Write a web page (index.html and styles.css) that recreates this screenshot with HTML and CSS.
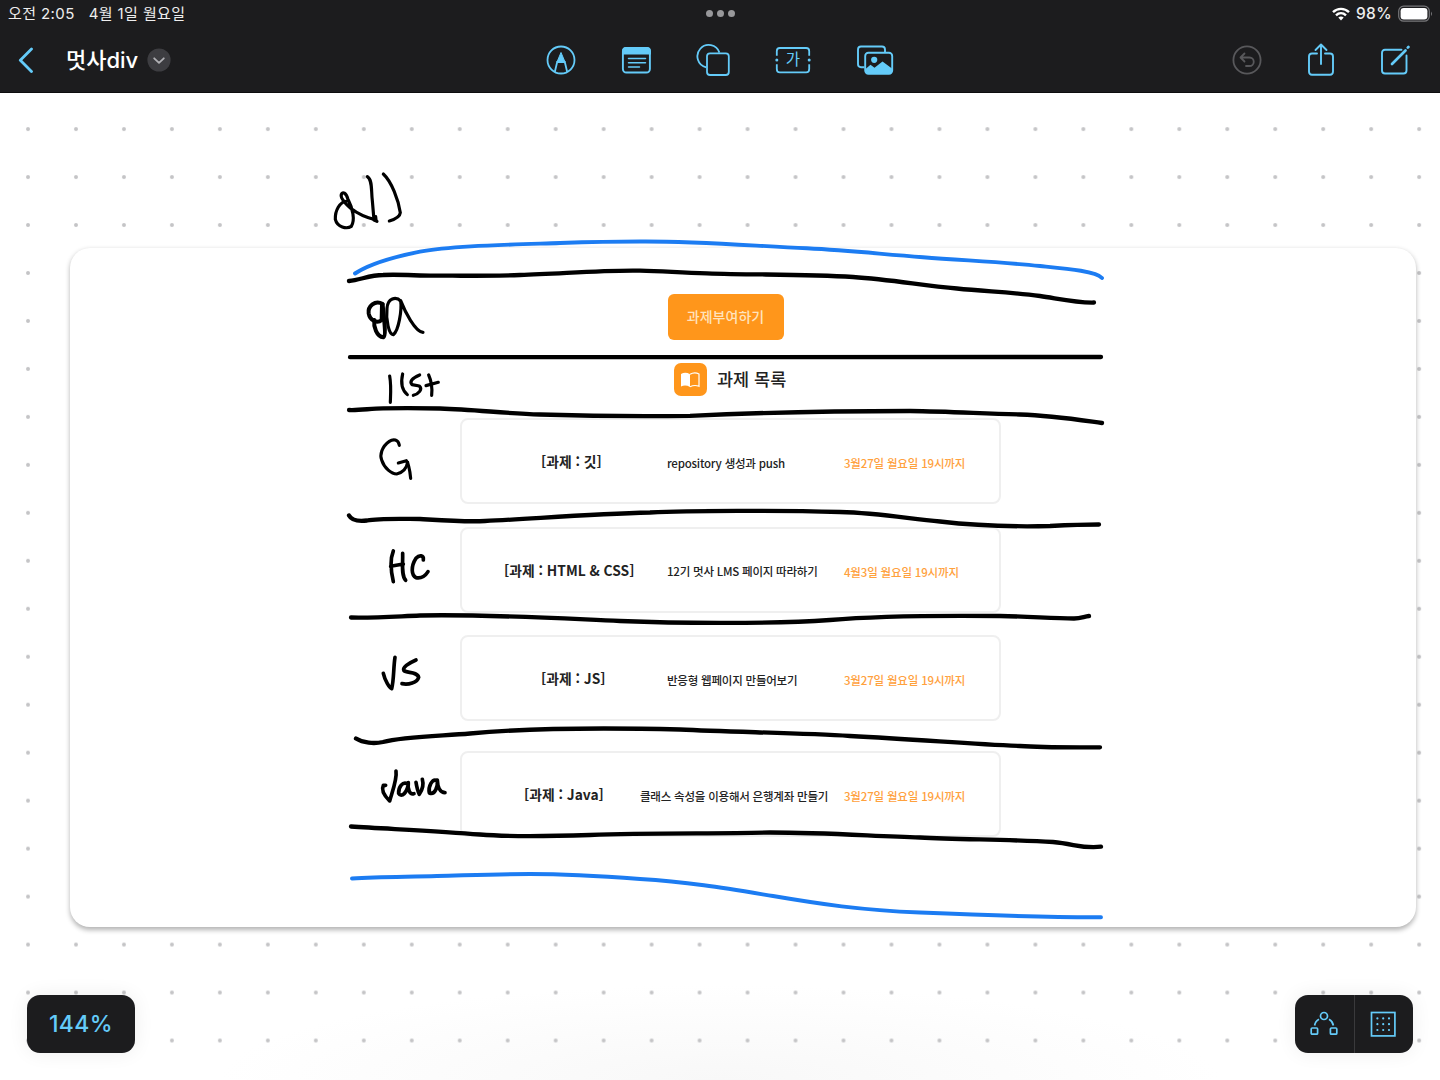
FILE: index.html
```html
<!DOCTYPE html>
<html lang="ko">
<head>
<meta charset="utf-8">
<title>멋사div</title>
<link rel="stylesheet" href="styles.css">
</head>
<body>
<div class="app">
  <header class="topbar">
    <div class="status">
      <div class="status-left"><span class="time">오전 2:05</span><span class="date">4월 1일 월요일</span></div>
      <div class="dots"><i></i><i></i><i></i></div>
      <div class="status-right">
        <svg class="wifi" width="18" height="14" viewBox="0 0 18 14" fill="none" stroke="#fff" stroke-width="2.4"><path d="M1 5.2C5.5.8 12.500.8 17 5.200M4 8.300C6.900 5.500 11.100 5.500 14 8.300"/><path d="M6.300 10.600Q9 8.400 11.700 10.600L9 13.400z" fill="#fff" stroke="none"/></svg>
        <span class="percent">98%</span>
        <svg width="36" height="18" viewBox="0 0 36 18"><rect x=".7" y="1.200" width="30.600" height="15" rx="5" fill="none" stroke="#77777a" stroke-width="1.200"/><rect x="2.600" y="3" width="26.800" height="11.400" rx="3.200" fill="#fff"/><path d="M33 6.500q2 2.300 0 4.600z" fill="#77777a"/></svg>
      </div>
    </div>
    <nav class="tools">
      <div class="nav-left">
        <svg width="16" height="26" viewBox="0 0 16 26" fill="none" stroke="#64cbf9" stroke-width="2.800" stroke-linecap="round" stroke-linejoin="round"><path d="M13.500 1.900L2.300 13.200L13.500 24.500"/></svg>
        <h1>멋사div</h1>
        <svg class="chevron" width="24" height="24" viewBox="0 0 24 24"><circle cx="12" cy="12" r="11.600" fill="#3d3d41"/><path d="M7.200 10.300L12 14.900L16.800 10.300" fill="none" stroke="#b0b0b4" stroke-width="1.800" stroke-linecap="round" stroke-linejoin="round"/></svg>
      </div>
      <div class="nav-center">
        <svg width="30" height="34" viewBox="0 0 30 34" fill="none" stroke="#64cbf9" stroke-width="1.800"><circle cx="15" cy="17" r="13.500"/><path d="M8.800 29L11.200 19H18.800L21.200 29"/><path d="M15 9.500L11 19H19z" fill="#64cbf9" stroke-linejoin="round" stroke-width="1"/></svg>
        <svg width="30" height="34" viewBox="0 0 30 34" fill="none" stroke="#64cbf9" stroke-width="1.900"><rect x="1.900" y="5" width="27" height="24.500" rx="3.500"/><path d="M2 10.500V8q0-3 3-3H26q3 0 3 3V10.500z" fill="#64cbf9"/><path d="M7.500 15.500H24.500M7.500 19.700H24.500M7.500 24H18.500" stroke-width="1.500" stroke-linecap="round"/></svg>
        <svg width="34" height="34" viewBox="0 0 34 34" fill="none" stroke="#64cbf9" stroke-width="1.800"><path d="M10.200 24.300A11.300 11.300 0 1 1 23.400 9.600"/><rect x="11" y="10.300" width="21.800" height="21.700" rx="3"/></svg>
        <svg width="36" height="34" viewBox="0 0 36 34" fill="none" stroke="#64cbf9" stroke-width="1.800"><path d="M1.800 12.800V8Q1.800 5 4.800 5H31.200Q34.200 5 34.200 8V12.800M1.800 21.200V26Q1.800 29.400 4.800 29.400H31.200Q34.200 29.400 34.200 26V21.200"/><g fill="#64cbf9" stroke="none"><circle cx="1.800" cy="17" r="1.500"/><circle cx="34.200" cy="17" r="1.500"/></g><text x="18" y="22.300" text-anchor="middle" class="ga">가</text></svg>
        <svg width="38" height="34" viewBox="0 0 38 34" fill="none" stroke="#64cbf9" stroke-width="1.900"><path d="M8.500 24.200H5Q2 24.200 2 21.200V6.700Q2 3.500 5 3.500H26Q29 3.500 29 6.700V9.500"/><rect x="9.200" y="9.700" width="27" height="21" rx="3.200"/><circle cx="18.200" cy="16.800" r="3.100" fill="#64cbf9" stroke="none"/><path d="M9.500 26L14.500 21.800L18.500 24.800L26.500 18.500L36 25.500V28Q36 30.500 33 30.500H12.500Q9.500 30.500 9.500 28z" fill="#64cbf9" stroke="none"/></svg>
      </div>
      <div class="nav-right">
        <svg width="30" height="34" viewBox="0 0 30 34" fill="none" stroke="#58585b" stroke-width="1.800" stroke-linecap="round" stroke-linejoin="round"><circle cx="15" cy="17" r="13.600"/><path d="M12.500 10.500L8.500 14.500L12.500 18.500M8.800 14.500H17.500A4.200 4.200 0 0 1 17.500 23H14"/></svg>
        <svg width="28" height="36" viewBox="0 0 28 36" fill="none" stroke="#64cbf9" stroke-width="1.900" stroke-linecap="round" stroke-linejoin="round"><path d="M10 11.500H5Q2 11.500 2 14.500V29.500Q2 32.700 5 32.700H23Q26 32.700 26 29.500V14.500Q26 11.500 23 11.500H18M14 22V2.800M8.500 8L14 2.500L19.500 8"/></svg>
        <svg width="30" height="34" viewBox="0 0 30 34" fill="none" stroke="#64cbf9" stroke-width="1.900" stroke-linecap="round"><path d="M21.500 6.800H5Q2 6.800 2 9.800V27.500Q2 30.500 5 30.500H23.500Q26.500 30.500 26.500 27.500V12.500"/><path d="M12 21L25.500 7.500" stroke-width="2.700"/><path d="M27.800 4.600L28.400 4" stroke-width="2.700"/></svg>
      </div>
    </nav>
  </header>

  <main class="board">
    <svg class="grid-dots" width="1440" height="987">
      <defs><pattern id="dots" x="4.020" y="12.100" width="47.970" height="47.970" patternUnits="userSpaceOnUse"><circle cx="24" cy="24" r="2" fill="#c4c4c6"/></pattern></defs>
      <rect width="1440" height="987" fill="url(#dots)"/>
    </svg>

    <section class="sheet">
      <div class="assign">과제부여하기</div>
      <div class="heading">
        <span class="book"><svg width="20" height="16" viewBox="0 0 20 16"><path d="M10 2.300Q5.500-.4 1 2V14.500Q5.500 12.500 10 15z" fill="#fff"/><path d="M10 2.300Q14.500-.4 19 2V14.300Q14.500 12.500 10 14.800" fill="none" stroke="#fff" stroke-width="1.200"/></svg></span>
        <h2>과제 목록</h2>
      </div>
      <div class="tasks">
        <article class="task git"><h3>[과제 : 깃]</h3><p>repository 생성과 push</p><time>3월27일 월요일 19시까지</time></article>
        <article class="task html"><h3>[과제 : HTML &amp; CSS]</h3><p>12기 멋사 LMS 페이지 따라하기</p><time>4월3일 월요일 19시까지</time></article>
        <article class="task js"><h3>[과제 : JS]</h3><p>반응형 웹페이지 만들어보기</p><time>3월27일 월요일 19시까지</time></article>
        <article class="task java"><h3>[과제 : Java]</h3><p>클래스 속성을 이용해서 은행계좌 만들기</p><time>3월27일 월요일 19시까지</time></article>
      </div>
    </section>

    <svg class="ink" width="1440" height="987" viewBox="0 93 1440 987">
      <g class="blue">
        <path d="M355 273.500C368 265 393 257 420 251.700C450 246 500 245 560 243C590 242 610 241.500 640 241.500C690 241 740 245 807 248.300C850 250.500 880 254 923 257.200C965 260.500 1000 262 1040 266C1065 268.500 1096 271 1102 278"/>
        <path d="M352 878.500C380 876.500 410 877 437 876C475 875 500 874 530 874C570 874 600 876 640 879C690 882 730 889 773 896C820 904 860 910 920 912.500C980 915 1040 917.500 1101 917.200"/>
      </g>
      <g class="black">
        <path d="M349 281C360 280 370 275 383 275C400 274 420 276 437 275.700C465 275.700 490 276 520 275C560 274 600 270 640 270.700C665 271 680 273 707 273.300C755 275 805 274 853 277C890 279.500 920 285 957 288.500C985 291.500 1010 292 1040 296C1060 299 1077 303 1094 302.500"/>
        <path d="M350 357.200L1101 357"/>
        <path d="M349 410C360 410.500 370 408.500 383 408.300C405 408 420 408 440 408.500C475 409.500 505 413.500 540 414.500C590 416 640 416.500 690 415.800C750 413 840 411 910 411C950 411.500 980 413.500 1020 414.500C1052 415.500 1080 420 1102 423"/>
        <path d="M349 515.500C352 521 359 521.500 367 520.500C380 518 405 519 420 519C445 520.500 465 522 485 521C530 519 590 514 650 512.500C690 510.500 780 510.500 840 512C880 513 910 519 940 521.500C970 525 1010 527 1050 526C1070 525 1085 524.500 1099 524.500"/>
        <path d="M351 617.500C375 618 395 616.500 420 615.500C480 614 550 618 620 621C680 623.500 770 624 830 620C875 616 950 615.500 1000 616C1030 616.500 1053 618.500 1074 618.500C1081 618.500 1084 616.500 1089 616"/>
        <path d="M356 738.500C363 743 374 744 383 742C403 736.500 440 736 470 733.500C530 728 620 728 680 729.500C730 732 800 733 850 736C920 739.500 970 744 1020 746C1040 747.500 1070 747.500 1100 747.300"/>
        <path d="M351 826.500C390 829 440 831 480 834.500C510 837 540 836.500 590 835C650 832.500 720 834 770 832.500C825 832.500 870 836 920 837.500C960 839.500 1010 839.500 1053 842C1075 844 1083 849 1101 846.700"/>
      </g>
      <g class="pen" transform="translate(320 160) scale(.3333)">
        <path d="M82 123C58 125 45 153 46 178C52 202 80 208 94 199C106 180 98 145 84 118C78 98 68 94 64 103C60 114 75 130 92 145C115 163 142 174 168 180L167 170"/>
        <path d="M142 50C158 60 153 90 157 122L162 180L171 184"/>
        <path d="M190 42C215 65 235 120 241 158C240 170 225 178 208 183"/>
        <path class="bold" d="M188 432C165 418 143 440 146 460C150 482 172 492 185 480L186 434"/>
        <path class="bold" d="M163 480C160 500 170 530 190 532C200 528 191 470 188 434"/>
        <path d="M243 424C228 408 203 414 201 445C197 480 207 525 220 524C236 512 246 450 242 422C255 455 285 515 309 517"/>
        <path d="M209 648C214 675 212 700 211 727"/>
        <path d="M248 642C242 668 245 690 262 704"/>
        <path d="M299 645C275 655 268 666 276 674L298 678C309 688 296 702 280 706"/>
        <path d="M326 645C335 665 337 688 335 706M318 677L355 667"/>
      </g>
      <g class="pen" transform="translate(340 400) scale(.3333)">
        <path d="M178 136C175 118 160 116 148 124C125 140 119 165 125 180C133 205 155 222 170 222C188 218 200 205 203 187"/>
        <path d="M175 189L199 182C208 194 210 215 212 235"/>
        <path class="firm" d="M160 453C149 480 153 515 160 545M188 460C189 490 183 525 197 541M152 499L190 492"/>
        <path class="firm" d="M250 480C252 465 238 464 228 475C212 500 214 525 228 533C245 537 258 525 264 515"/>
      </g>
      <g class="pen firm" transform="translate(340 620) scale(.3333)">
        <path d="M165 112C160 145 162 180 155 206C148 203 135 182 130 160"/>
        <path d="M228 120C205 130 186 143 192 152C200 160 232 154 236 172C232 188 205 195 186 191"/>
        <path d="M168 453C172 478 155 520 149 543C138 532 122 512 130 496L137 496"/>
        <path d="M203 492C188 484 175 500 176 520C184 535 203 518 205 488C202 508 210 526 222 521"/>
        <path d="M228 487C230 500 234 515 238 523C247 510 252 495 247 478"/>
        <path d="M291 482C277 474 264 500 268 519C285 526 294 500 292 480C293 500 300 518 315 518"/>
      </g>
    </svg>

    <div class="zoom">144%</div>
    <div class="modes">
      <div><svg width="28" height="26" viewBox="0 0 28 26" fill="none" stroke="#64cbf9" stroke-width="1.700"><circle cx="14" cy="5" r="3.500"/><rect x="1.200" y="17" width="6.400" height="6.200" rx="1"/><rect x="20.400" y="17" width="6.400" height="6.200" rx="1"/><path d="M4.600 14.500Q5.300 10.200 9 8.200M23.400 14.500Q22.700 10.200 19 8.200"/></svg></div>
      <div><svg width="26" height="26" viewBox="0 0 26 26"><rect x="1.500" y="1.500" width="23.400" height="23.400" fill="none" stroke="#64cbf9" stroke-width="1.700"/><g stroke="#64cbf9" stroke-width="2.200" stroke-linecap="round" stroke-dasharray="0 5.800"><path d="M7.400 7.400H19.100M7.400 13.200H19.100M7.400 19H19.100"/></g></svg></div>
    </div>
  </main>
</div>
</body>
</html>
```
FILE: styles.css
```css
* { box-sizing: border-box; margin: 0; padding: 0; }
body { width: 1440px; height: 1080px; overflow: hidden; background: #fff; font-family: Inter, "Noto Sans CJK KR", sans-serif; }
svg { display: block; flex: none; }
.app { display: flex; flex-direction: column; height: 1080px; }

.topbar { height: 93px; flex: none; background: #1c1c1e; color: #fff; border-bottom: 1px solid #0d0d0e; }
.status { display: grid; grid-template-columns: 1fr auto 1fr; align-items: center; height: 27px; padding: 0 6px 0 8px; font-weight: 500; color: #eee; white-space: nowrap; }
.status-left { display: flex; gap: 14px; font-size: 15px; font-weight: 400; line-height: 22px; letter-spacing: .4px; }
.dots { display: flex; gap: 4px; margin-right: 1px; }
.dots i { width: 7px; height: 7px; border-radius: 50%; background: #98989b; }
.status-right { display: flex; justify-content: flex-end; align-items: center; }
.wifi { margin-right: 6px; }
.percent { margin-right: 6px; font-size: 15.500px; letter-spacing: .4px; }
.tools { display: grid; grid-template-columns: 1fr auto 1fr; align-items: center; height: 66px; }
.nav-left { display: flex; align-items: center; padding-left: 18px; }
h1 { margin-left: 32px; font-size: 22px; font-weight: 500; line-height: 30px; }
.chevron { margin-left: 9px; }
.nav-center { display: flex; align-items: center; gap: 45px; }
.ga { fill: #64cbf9; stroke: none; font: 400 15.500px "Noto Sans CJK KR", sans-serif; }
.nav-right { display: flex; justify-content: flex-end; align-items: center; gap: 45px; padding-right: 30px; }

.board { position: relative; flex: 1; background: radial-gradient(ellipse 500px 95px at 50% 100%, #f8f8f8, #fff); }
.grid-dots, .ink { position: absolute; top: 0; left: 0; }
.sheet { position: absolute; left: 69.500px; top: 154.500px; width: 1346px; height: 679px; border-radius: 20px; background: #fff; box-shadow: 0 2.500px 5px rgba(0,0,0,.3); padding: 46.500px 0 0 390.500px; color: #222; font-family: "Noto Sans CJK KR", sans-serif; }
.assign { width: 116px; height: 46px; margin-left: 207.500px; border-radius: 6px; background: #ff961b; color: #ffe3bd; font-size: 14px; font-weight: 500; line-height: 45px; text-align: center; }
.heading { display: flex; align-items: center; gap: 10.500px; margin: 23px 0 0 213.500px; height: 33px; }
.book { display: grid; place-items: center; width: 33px; height: 33px; border-radius: 7px; background: #ff961b; }
h2 { padding-bottom: 2px; font-size: 17.500px; font-weight: 500; line-height: 28px; white-space: nowrap; }
.tasks { display: flex; flex-direction: column; margin-top: 22px; }
.task { display: grid; grid-template-columns: var(--a) var(--b) auto; align-items: center; width: 541px; height: 86px; margin-bottom: 22.500px; padding-left: var(--l); border: 2px solid #efefef; border-radius: 8px; white-space: nowrap; }
.git { --l: 79px; --a: 126px; --b: 177px; }
.html { --l: 42px; --a: 163px; --b: 177px; }
.js { --l: 79px; --a: 126px; --b: 177px; margin-bottom: 30px; }
.java { --l: 62px; --a: 116px; --b: 204px; }
h3 { font-size: 13.800px; font-weight: 700; line-height: 20px; }
.task p { font-size: 11.500px; font-weight: 500; line-height: 18px; padding-top: 3px; letter-spacing: -.22px; }
.task time { color: #ffa13d; font-size: 11.500px; font-weight: 500; line-height: 18px; padding-top: 4px; letter-spacing: -.18px; }

.ink { fill: none; stroke-linecap: round; stroke-linejoin: round; }
.blue { stroke: #1c7cf2; stroke-width: 3.900; }
.black { stroke: #000; stroke-width: 4.300; }
.pen { stroke: #000; stroke-width: 9.500; }
.firm { stroke-width: 11; }
.bold { stroke-width: 12; }

.zoom, .modes { position: absolute; top: 902px; height: 58px; border-radius: 13px; background: #1c1c1e; box-shadow: 0 0 20px rgba(0,0,0,.07); }
.zoom { left: 27px; width: 108px; color: #64cbf9; font-size: 23px; font-weight: 500; line-height: 58px; letter-spacing: .4px; text-align: center; }
.modes { left: 1295px; width: 118px; display: grid; grid-template-columns: 1fr 1fr; }
.modes div { display: grid; place-items: center; padding-right: 2px; }
.modes div + div { border-left: 1px solid #3a3a3c; }
```
